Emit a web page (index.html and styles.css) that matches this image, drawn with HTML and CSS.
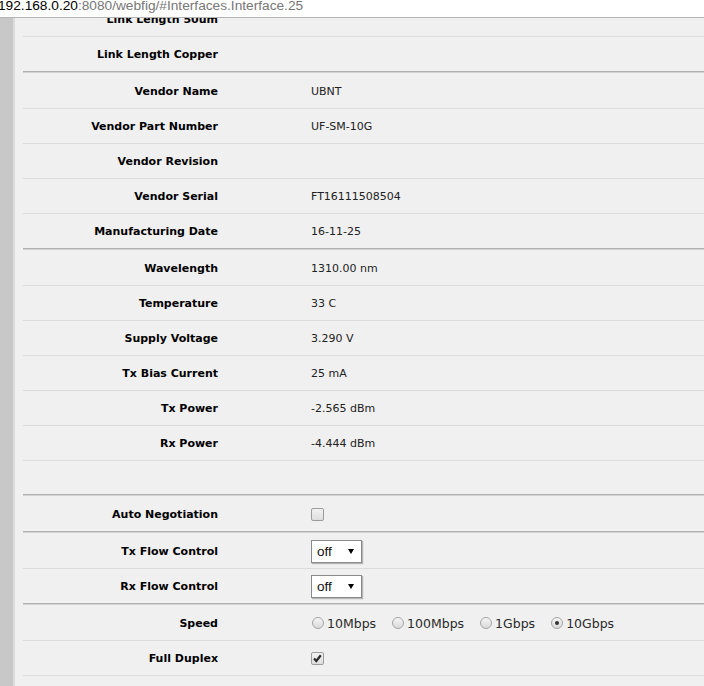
FILE: index.html
```html
<!DOCTYPE html>
<html lang="en">
<head>
  <meta charset="UTF-8">
  <meta name="viewport" content="width=device-width, initial-scale=1.0">
  <title>Interface</title>
  <link rel="stylesheet" href="styles.css">
</head>
<body>

  <!-- Address bar -->
  <div class="addr"><span class="host">192.168.0.20</span>:8080/webfig/#Interfaces.Interface.25</div>

  <div class="page">
    <div class="sidebar"></div>

    <div class="content">

      <!-- Link length -->
      <div class="section">
        <div class="row"><div class="label">Link Length 50um</div><div class="value"></div></div>
        <div class="row"><div class="label">Link Length Copper</div><div class="value"></div></div>
      </div>

      <!-- Vendor info -->
      <div class="section">
        <div class="row"><div class="label">Vendor Name</div><div class="value">UBNT</div></div>
        <div class="row"><div class="label">Vendor Part Number</div><div class="value">UF-SM-10G</div></div>
        <div class="row"><div class="label">Vendor Revision</div><div class="value"></div></div>
        <div class="row"><div class="label">Vendor Serial</div><div class="value">FT16111508504</div></div>
        <div class="row"><div class="label">Manufacturing Date</div><div class="value">16-11-25</div></div>
      </div>

      <!-- Monitor values -->
      <div class="section">
        <div class="row"><div class="label">Wavelength</div><div class="value">1310.00 nm</div></div>
        <div class="row"><div class="label">Temperature</div><div class="value">33 C</div></div>
        <div class="row"><div class="label">Supply Voltage</div><div class="value">3.290 V</div></div>
        <div class="row"><div class="label">Tx Bias Current</div><div class="value">25 mA</div></div>
        <div class="row"><div class="label">Tx Power</div><div class="value">-2.565 dBm</div></div>
        <div class="row"><div class="label">Rx Power</div><div class="value">-4.444 dBm</div></div>
        <div class="row empty"></div>
      </div>

      <!-- Negotiation -->
      <div class="section">
        <div class="row">
          <div class="label">Auto Negotiation</div>
          <div class="value"><span class="check"></span></div>
        </div>
      </div>

      <!-- Flow control -->
      <div class="section">
        <div class="row">
          <div class="label">Tx Flow Control</div>
          <div class="value"><span class="select">off<span class="arrow"></span></span></div>
        </div>
        <div class="row">
          <div class="label">Rx Flow Control</div>
          <div class="value"><span class="select">off<span class="arrow"></span></span></div>
        </div>
      </div>

      <!-- Speed / duplex -->
      <div class="section">
        <div class="row">
          <div class="label">Speed</div>
          <div class="value radios">
            <span class="opt"><span class="radio"></span>10Mbps</span>
            <span class="opt"><span class="radio"></span>100Mbps</span>
            <span class="opt"><span class="radio"></span>1Gbps</span>
            <span class="opt"><span class="radio on"></span>10Gbps</span>
          </div>
        </div>
        <div class="row">
          <div class="label">Full Duplex</div>
          <div class="value">
            <span class="check">
              <svg width="13" height="13" viewBox="0 0 13 13"><path d="M3 6.5 L5.3 9 L9.8 3.3" fill="none" stroke="#2a2a2a" stroke-width="2.2"/></svg>
            </span>
          </div>
        </div>
        <div class="row"><div class="label"></div><div class="value"></div></div>
      </div>

    </div>
  </div>

</body>
</html>
```

FILE: styles.css
```css
/* Basic styling */
html, body {
  height: 686px;
  overflow: hidden;
}

body {
  margin: 0;
  font-family: "DejaVu Sans", Verdana, sans-serif;
  font-size: 11px;
  color: #000;
  background-color: #f0f0f0;
}

/* Address bar */
.addr {
  height: 17px;
  line-height: 11px;
  margin-left: -2px;
  overflow: hidden;
  background-color: #fff;
  border-bottom: 1px solid #b4b4b4;
  font-family: "Liberation Sans", Arial, sans-serif;
  font-size: 13.7px;
  color: #777;
  white-space: nowrap;
}

.addr .host {
  color: #000;
}

/* Page layout */
.page {
  display: flex;
  height: 668px;
  overflow: hidden;
}

.sidebar {
  width: 13px;
  flex-shrink: 0;
  background-color: #c8c8c8;
  border-right: 2px solid #dcdcdc;
}

.content {
  flex: 1;
  margin-top: -17px;
  padding-left: 8px;
}

/* Sections and rows */
.section {
  padding-top: 1px;
  border-bottom: 1px solid #d2d2d2;
}

.row {
  display: flex;
  align-items: center;
  height: 34px;
  border-bottom: 1px solid #dcdcdc;
}

.section .row:last-child {
  border-bottom-color: #b1b1b1;
}

.section:last-child {
  border-bottom: none;
}

.section:last-child .row:last-child {
  border-bottom-color: #dcdcdc;
}

.row.empty {
  height: 33px;
}

.label {
  width: 195px;
  flex-shrink: 0;
  text-align: right;
  font-weight: bold;
  color: #000;
}

.value {
  margin-left: 93px;
  color: #222;
}

/* Checkbox */
.check {
  display: block;
  width: 11px;
  height: 11px;
  border: 1px solid #9c9c9c;
  border-radius: 2px;
  background: linear-gradient(#f2f2f2, #dedede);
  position: relative;
}

.check svg {
  position: absolute;
  left: -1px;
  top: -1px;
}

/* Select box */
.select {
  display: flex;
  align-items: center;
  width: 44px;
  height: 21px;
  padding-left: 5px;
  border: 1px solid #8a8a8a;
  background-color: #fff;
  box-shadow: 1px 1px 1px rgba(0, 0, 0, 0.25);
  font-family: "Liberation Sans", Arial, sans-serif;
  font-size: 13.5px;
  color: #111;
}

.arrow {
  margin-left: auto;
  margin-right: 7px;
  border-left: 3px solid transparent;
  border-right: 3px solid transparent;
  border-top: 5px solid #000;
}

/* Radio buttons */
.radios {
  display: flex;
  gap: 16px;
  margin-left: 94px;
  font-size: 12.5px;
  color: #2a2a2a;
}

.opt {
  display: flex;
  align-items: center;
  gap: 3px;
}

.radio {
  display: block;
  width: 10px;
  height: 10px;
  border: 1px solid #a4a4a4;
  border-radius: 50%;
  background: linear-gradient(#f4f4f4, #dadada);
  position: relative;
}

.radio.on::after {
  content: "";
  position: absolute;
  left: 3px;
  top: 3px;
  width: 4px;
  height: 4px;
  border-radius: 50%;
  background-color: #333;
}
```
